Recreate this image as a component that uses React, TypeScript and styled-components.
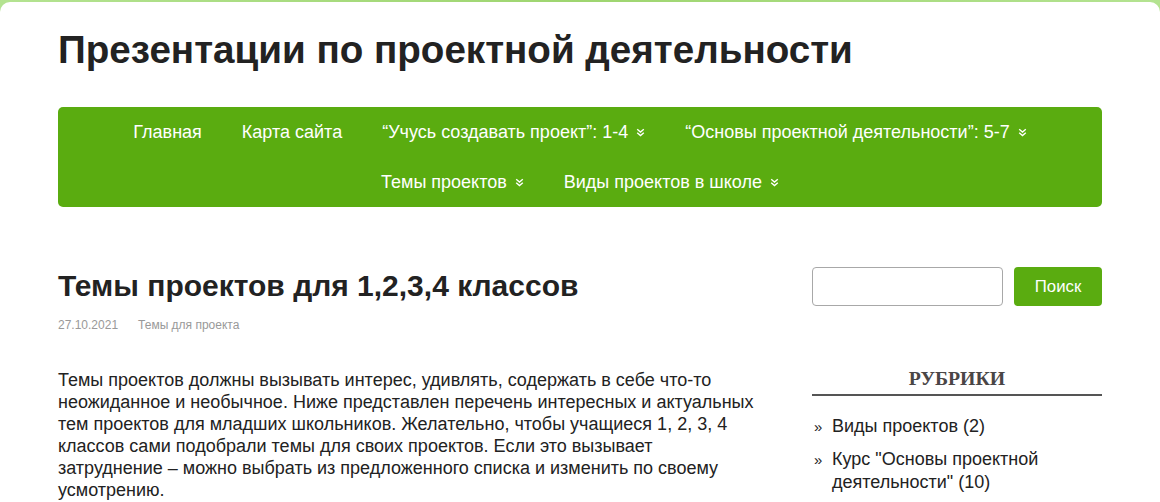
import styled, { createGlobalStyle } from "styled-components";

const GlobalStyle = createGlobalStyle`
  html, body {
    margin: 0;
    padding: 0;
  }
  body {
    background: linear-gradient(90deg, #b4e391 0%, #9ed56f 50%, #b4e391 100%);
    font-family: "Liberation Sans", Arial, sans-serif;
    color: #222;
  }
`;

const Page = styled.div`
  box-sizing: border-box;
  margin-top: 2px;
  min-height: 500px;
  padding: 24px 58px 0;
  background: #fff;
  border-radius: 10px 10px 0 0;
`;

const SiteTitle = styled.h1`
  margin: 0;
  font-size: 38.6px;
  line-height: 48px;
  font-weight: 700;
  color: #222;
`;

const Nav = styled.nav`
  margin-top: 33px;
  display: flex;
  flex-wrap: wrap;
  justify-content: center;
  background: #5aac10;
  border-radius: 5px;
`;

const NavItem = styled.a`
  display: flex;
  align-items: center;
  gap: 8px;
  height: 50px;
  padding: 0 20px;
  color: #fff;
  font-size: 18px;
  text-decoration: none;
  cursor: pointer;
`;

const Chevron = () => (
  <svg width="9" height="9" viewBox="0 0 9 9" fill="none" stroke="#fff" strokeWidth="1.4">
    <polyline points="1.2,1.2 4.5,4 7.8,1.2" />
    <polyline points="1.2,4.8 4.5,7.6 7.8,4.8" />
  </svg>
);

const Content = styled.div`
  display: flex;
  margin-top: 60px;
`;

const Main = styled.main`
  width: 698px;
`;

const PostTitle = styled.h2`
  margin: 2px 0 0;
  font-size: 30px;
  line-height: 34px;
  font-weight: 700;
  color: #222;
`;

const Meta = styled.div`
  display: flex;
  gap: 20px;
  margin-top: 14px;
  font-size: 12px;
  line-height: 16px;
  color: #999;
`;

const Paragraph = styled.p`
  margin: 36px 0 0;
  font-size: 18px;
  line-height: 22px;
  color: #222;
`;

const Sidebar = styled.aside`
  width: 290px;
  margin-left: auto;
`;

const SearchForm = styled.form`
  display: flex;
  gap: 11px;
`;

const SearchInput = styled.input`
  box-sizing: border-box;
  width: 191px;
  height: 39px;
  border: 1px solid #a8a8a8;
  border-radius: 4px;
  outline: none;
`;

const SearchButton = styled.button`
  width: 88px;
  height: 39px;
  border: none;
  border-radius: 4px;
  background: #5aac10;
  color: #fff;
  font-family: "Liberation Sans", Arial, sans-serif;
  font-size: 16.8px;
  cursor: pointer;
`;

const WidgetTitle = styled.h3`
  margin: 60px 0 0;
  padding-bottom: 4px;
  border-bottom: 2px solid #555;
  text-align: center;
  font-family: "Liberation Serif", "Times New Roman", serif;
  font-size: 19.8px;
  line-height: 24px;
  font-weight: 700;
  text-transform: uppercase;
  color: #4a4646;
`;

const CatList = styled.ul`
  list-style: none;
  margin: 19px 0 0;
  padding: 0;
`;

const CatItem = styled.li`
  position: relative;
  padding-left: 20px;
  margin-bottom: 10px;
  font-size: 18px;
  line-height: 23px;
  color: #222;

  &::before {
    content: "»";
    position: absolute;
    left: 2px;
    top: 0;
    font-size: 15px;
  }
`;

const navItems = [
  { label: "Главная" },
  { label: "Карта сайта" },
  { label: "“Учусь создавать проект”: 1-4", sub: true },
  { label: "“Основы проектной деятельности”: 5-7", sub: true },
  { label: "Темы проектов", sub: true },
  { label: "Виды проектов в школе", sub: true },
];

export default function App() {
  return (
    <>
      <GlobalStyle />
      <Page>
        <SiteTitle>Презентации по проектной деятельности</SiteTitle>
        <Nav>
          {navItems.map((item) => (
            <NavItem key={item.label}>
              {item.label}
              {item.sub && <Chevron />}
            </NavItem>
          ))}
        </Nav>
        <Content>
          <Main>
            <PostTitle>Темы проектов для 1,2,3,4 классов</PostTitle>
            <Meta>
              <span>27.10.2021</span>
              <span>Темы для проекта</span>
            </Meta>
            <Paragraph>
              Темы проектов должны вызывать интерес, удивлять, содержать в себе что-то
              неожиданное и необычное. Ниже представлен перечень интересных и актуальных
              тем проектов для младших школьников. Желательно, чтобы учащиеся 1, 2, 3, 4
              классов сами подобрали темы для своих проектов. Если это вызывает
              затруднение – можно выбрать из предложенного списка и изменить по своему
              усмотрению.
            </Paragraph>
          </Main>
          <Sidebar>
            <SearchForm onSubmit={(e) => e.preventDefault()}>
              <SearchInput type="text" />
              <SearchButton type="submit">Поиск</SearchButton>
            </SearchForm>
            <WidgetTitle>Рубрики</WidgetTitle>
            <CatList>
              <CatItem>Виды проектов (2)</CatItem>
              <CatItem>Курс "Основы проектной деятельности" (10)</CatItem>
            </CatList>
          </Sidebar>
        </Content>
      </Page>
    </>
  );
}
